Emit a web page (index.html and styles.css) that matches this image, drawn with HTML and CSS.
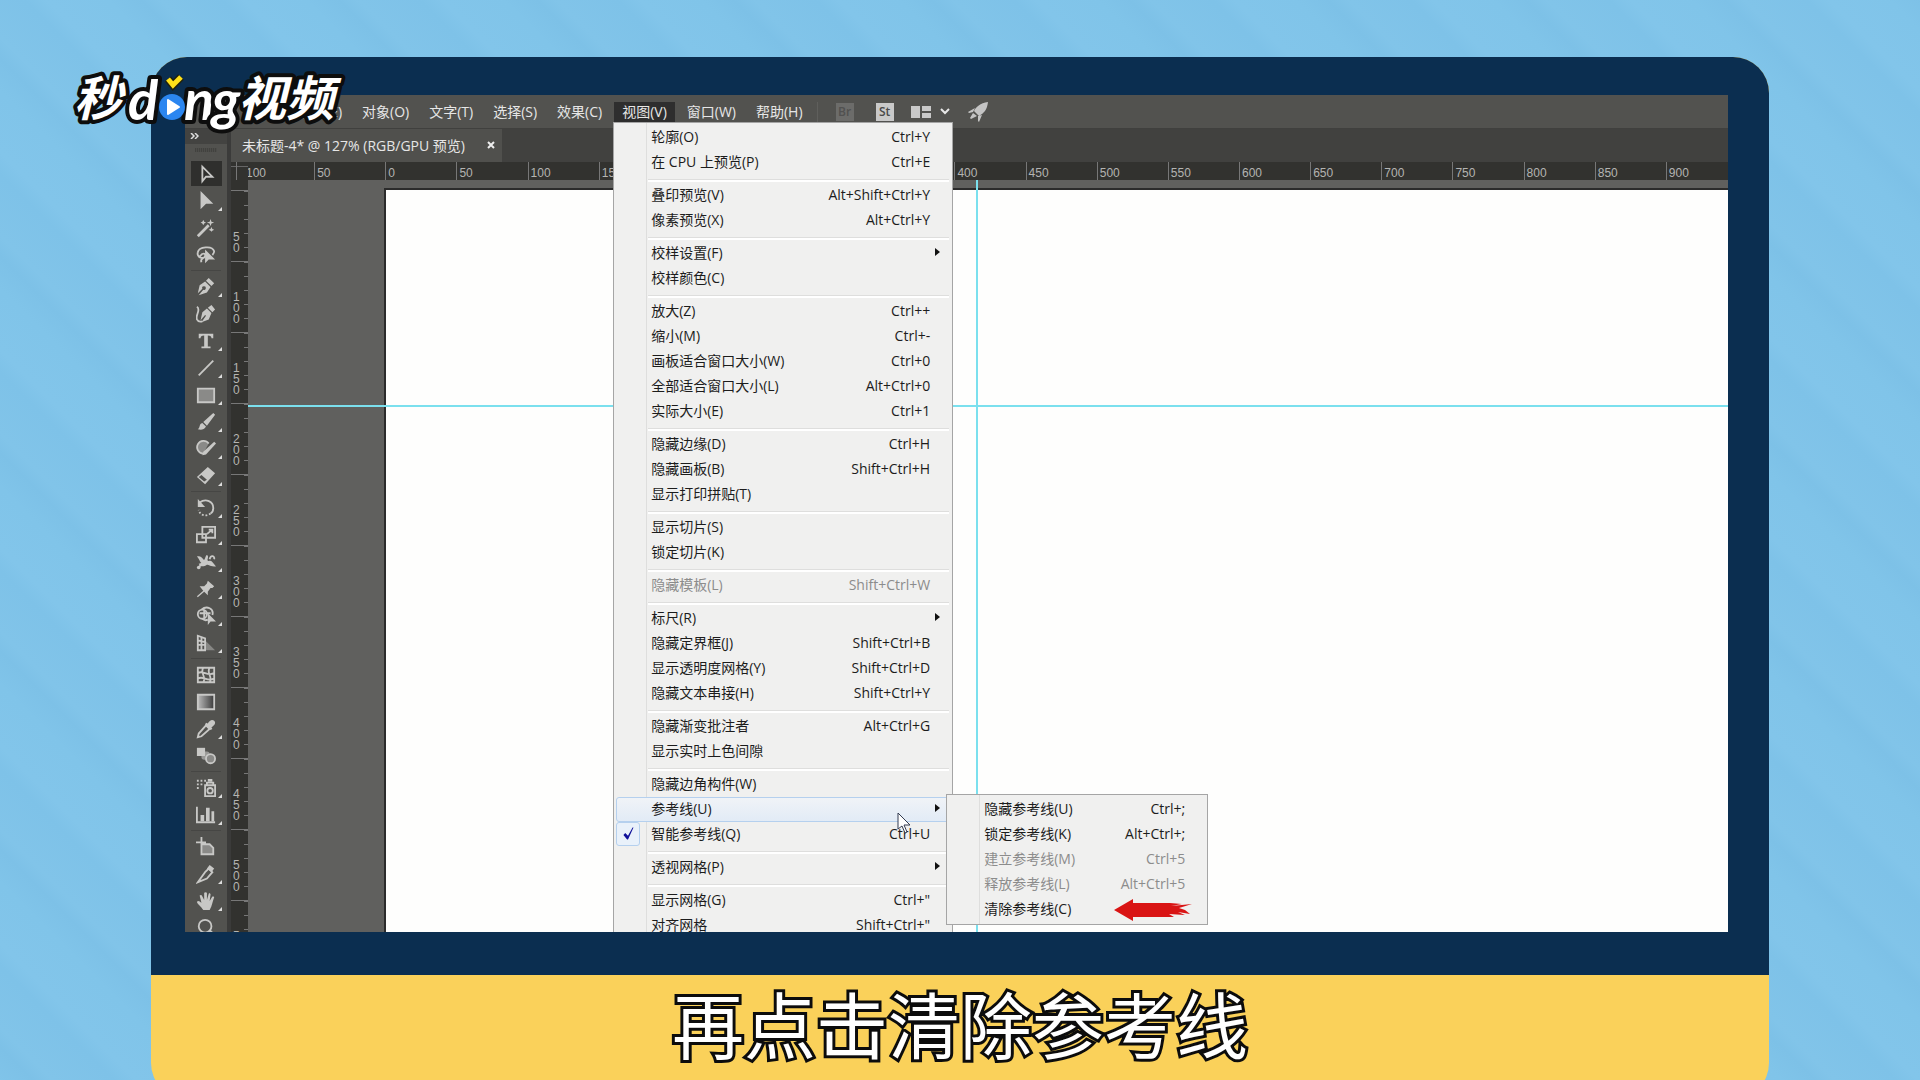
FILE: index.html
```html
<!DOCTYPE html>
<html lang="zh-CN">
<head>
    <meta charset="UTF-8">
    <title>再点击清除参考线</title>
    <link rel="stylesheet" href="styles.css">
</head>
<body>
    <div class="frame">
        <div class="bezel">
            <div class="screen">
                <nav class="menubar">
                    <button class="menu-btn">编辑(E)</button>
                    <button class="menu-btn">对象(O)</button>
                    <button class="menu-btn">文字(T)</button>
                    <button class="menu-btn">选择(S)</button>
                    <button class="menu-btn">效果(C)</button>
                    <div class="menu-open">
                        <button class="menu-btn active">视图(V)</button>
                        <ul class="menu">
                            <li><button>轮廓(O)<kbd>Ctrl+Y</kbd></button></li>
                            <li><button>在 CPU 上预览(P)<kbd>Ctrl+E</kbd></button></li>
                            <li class="sep"></li>
                            <li><button>叠印预览(V)<kbd>Alt+Shift+Ctrl+Y</kbd></button></li>
                            <li><button>像素预览(X)<kbd>Alt+Ctrl+Y</kbd></button></li>
                            <li class="sep"></li>
                            <li><button class="more">校样设置(F)</button></li>
                            <li><button>校样颜色(C)</button></li>
                            <li class="sep"></li>
                            <li><button>放大(Z)<kbd>Ctrl++</kbd></button></li>
                            <li><button>缩小(M)<kbd>Ctrl+-</kbd></button></li>
                            <li><button>画板适合窗口大小(W)<kbd>Ctrl+0</kbd></button></li>
                            <li><button>全部适合窗口大小(L)<kbd>Alt+Ctrl+0</kbd></button></li>
                            <li><button>实际大小(E)<kbd>Ctrl+1</kbd></button></li>
                            <li class="sep"></li>
                            <li><button>隐藏边缘(D)<kbd>Ctrl+H</kbd></button></li>
                            <li><button>隐藏画板(B)<kbd>Shift+Ctrl+H</kbd></button></li>
                            <li><button>显示打印拼贴(T)</button></li>
                            <li class="sep"></li>
                            <li><button>显示切片(S)</button></li>
                            <li><button>锁定切片(K)</button></li>
                            <li class="sep"></li>
                            <li><button disabled>隐藏模板(L)<kbd>Shift+Ctrl+W</kbd></button></li>
                            <li class="sep"></li>
                            <li><button class="more">标尺(R)</button></li>
                            <li><button>隐藏定界框(J)<kbd>Shift+Ctrl+B</kbd></button></li>
                            <li><button>显示透明度网格(Y)<kbd>Shift+Ctrl+D</kbd></button></li>
                            <li><button>隐藏文本串接(H)<kbd>Shift+Ctrl+Y</kbd></button></li>
                            <li class="sep"></li>
                            <li><button>隐藏渐变批注者<kbd>Alt+Ctrl+G</kbd></button></li>
                            <li><button>显示实时上色间隙</button></li>
                            <li class="sep"></li>
                            <li><button>隐藏边角构件(W)</button></li>
                            <li class="current">
                                <button class="more">参考线(U)</button>
                                <svg class="cursor" width="15" height="22" viewBox="0 0 15 22"><path d="M1 1v16l4-3 3 7 2-1-3-7h6z" fill="#fff" stroke="#333b50"/></svg>
                                <ul class="menu submenu">
                                    <li><button>隐藏参考线(U)<kbd>Ctrl+;</kbd></button></li>
                                    <li><button>锁定参考线(K)<kbd>Alt+Ctrl+;</kbd></button></li>
                                    <li><button disabled>建立参考线(M)<kbd>Ctrl+5</kbd></button></li>
                                    <li><button disabled>释放参考线(L)<kbd>Alt+Ctrl+5</kbd></button></li>
                                    <li>
                                        <button>清除参考线(C)</button>
                                        <svg class="pointer" width="79" height="22" viewBox="0 0 79 22"><path d="M0 11 19 0v4h37l12 1-11 2 21-2-13 4 6 2 5 4-12-2 7 3-16-1 5 3H19v4z" fill="#d91414"/></svg>
                                    </li>
                                </ul>
                            </li>
                            <li class="checked"><button>智能参考线(Q)<kbd>Ctrl+U</kbd></button>
                                <svg class="check" width="24" height="24" viewBox="0 0 24 24"><path d="M7 13l2-2 3 3 5-9h1l-6 13h-1z" fill="#10109a"/></svg>
                            </li>
                            <li class="sep"></li>
                            <li><button class="more">透视网格(P)</button></li>
                            <li class="sep"></li>
                            <li><button>显示网格(G)<kbd>Ctrl+"</kbd></button></li>
                            <li><button>对齐网格<kbd>Shift+Ctrl+"</kbd></button></li>
                        </ul>
                    </div>
                    <button class="menu-btn">窗口(W)</button>
                    <button class="menu-btn">帮助(H)</button>
                    <div class="app-bar">
                        <button class="badge dim">Br</button>
                        <button class="badge">St</button>
                        <button class="icon-btn" aria-label="排列文档">
                            <svg width="39" height="14" viewBox="0 0 39 14"><path d="M0 1h9v12H0zM11 1h9v5h-9zM11 8h9v5h-9z" fill="#c9c9c9"/><path d="M30 4l4 4 4-4" fill="none" stroke="#e8e8e8" stroke-width="2"/></svg>
                        </button>
                        <button class="icon-btn" aria-label="GPU 性能">
                            <svg width="20" height="20" viewBox="0 0 20 20"><path d="M20 0C12 1 8 5 6 9l5 5c5-3 8-6 9-14zM7 6L0 10l1 1 4-1zM14 13l-3 7-1-1v-5zM5 11l-3 5 1 1 6-3z" fill="#c4c4c4"/></svg>
                        </button>
                    </div>
                </nav>

                <div class="workspace">
                    <aside class="toolbox">
                        <div class="toolbox-head">
                            <svg width="9" height="6" viewBox="0 0 9 6"><path d="M1 0l3 3-3 3M5 0l3 3-3 3" fill="none" stroke="#ddd" stroke-width="1.5"/></svg>
                        </div>
                        <div class="grip"></div>
                        <div class="tools">
                            <button class="tool selected" aria-label="选择"><svg viewBox="0 0 22 22"><path d="M7 3v16l4-5h7z" class="line"/></svg></button>
                            <button class="tool sub" aria-label="直接选择"><svg viewBox="0 0 22 22"><path d="M5 0v20l6-6h8z"/></svg></button>
                            <button class="tool" aria-label="魔棒"><svg viewBox="0 0 22 22"><path d="M2 20L14 8" class="line thick"/><path d="M16 1l1 3 3 1-3 1-1 3-1-3-3-1 3-1zM8 2l1 2 2 1-2 1-1 2-1-2-2-1 2-1zM17 10l1 2 2 1-2 1-1 1-1-1-2-1 2-1z"/></svg></button>
                            <button class="tool" aria-label="套索"><svg viewBox="0 0 22 22"><path d="M9 14c-5 1-8-2-7-6 1-6 16-8 18-1 0 2-1 3-2 4M4 13c3-5 7-4 6-1-1 4-6 2-4 7" class="line"/><path d="M10 5v15l4-4h7z"/></svg></button>
                            <hr>
                            <button class="tool sub" aria-label="钢笔"><svg viewBox="0 0 22 22"><path d="M14 1l6 6-3 3-6-6zM10 5l6 6-4 6-9 3 5-6a2 2 0 1 0-1-1l-5 5L4 9z"/></svg></button>
                            <button class="tool" aria-label="曲率"><svg viewBox="0 0 22 22"><path d="M17 1l4 5-3 3-5-5zM12 5l5 5-3 7-8 3 5-7-1-1-5 6 2-9z"/><path d="M1 3c5 3-2 9 0 14 1 2 3 3 6 2" class="line"/></svg></button>
                            <button class="tool sub" aria-label="文字"><svg viewBox="0 0 22 22"><path d="M3 3h16v5h-2c0-2-1-3-4-3v12h3v2H6v-2h3V5C6 5 5 6 5 8H3z"/></svg></button>
                            <button class="tool sub" aria-label="直线段"><svg viewBox="0 0 22 22"><path d="M3 19L19 3" class="line"/></svg></button>
                            <button class="tool sub" aria-label="矩形"><svg viewBox="0 0 22 22"><path d="M2 4h18v15H2z" class="line soft"/></svg></button>
                            <button class="tool sub" aria-label="画笔"><svg viewBox="0 0 22 22"><path d="M19 1l2 2-9 12-4-4zM7 12l4 4c-2 4-6 4-9 3 3-2 1-6 5-7z"/></svg></button>
                            <button class="tool sub" aria-label="Shaper"><svg viewBox="0 0 22 22"><path d="M14 5A7 7 0 1 0 8 16" class="line soft"/><path d="M20 3l2 2L11 17l-4 1 1-4z"/></svg></button>
                            <button class="tool sub" aria-label="橡皮擦"><svg viewBox="0 0 22 22"><path fill-rule="evenodd" d="M13 1l8 7-11 12-9-8zM6 10l-3 2 6 5 3-2z"/></svg></button>
                            <hr>
                            <button class="tool sub" aria-label="旋转"><svg viewBox="0 0 22 22"><path d="M4 5c7-5 15-1 15 6 0 3-1 5-3 6" class="line"/><path d="M16 17c-5 4-12 2-13-4" class="line dash"/><path d="M2 1v9h8z"/></svg></button>
                            <button class="tool sub" aria-label="比例缩放"><svg viewBox="0 0 22 22"><path d="M7 2h14v12H7zM1 10h10v9H1zM12 10l6-5M14 5h4v4" class="line"/></svg></button>
                            <button class="tool sub" aria-label="宽度"><svg viewBox="0 0 22 22"><path d="M2 18L10 9" class="line"/><path d="M1 5c4-1 5 1 8 4 2-4 2-7 4-5 1 3-2 5 1 6 3-1 4 1 8 6-6 0-8-2-10-2-4 3-8 2-9-1l3-1C4 11 4 8 1 5z"/><circle cx="3" cy="17" r="2"/><path d="M15 8c1-5 6-4 5 0" class="line"/></svg></button>
                            <button class="tool sub" aria-label="操控变形"><svg viewBox="0 0 22 22"><path d="M13 2l7 6-2 2-2 0-3 4v4l-4-4-7 6-1-1 7-6-4-5 5 0 3-3z"/></svg></button>
                            <button class="tool sub" aria-label="形状生成器"><svg viewBox="0 0 22 22"><circle cx="7" cy="9" r="5" class="line"/><path d="M6 4c6-5 14-1 12 6M7 14c2 2 4 2 6 1M4 8h12M9 4v10" class="line"/><path d="M13 8v13l3-4h6z"/></svg></button>
                            <button class="tool sub" aria-label="透视网格"><svg viewBox="0 0 22 22"><path d="M2 3l8 3v13H2zM2 8l8 2M2 13h8M6 4v15" class="line"/><path d="M11 9l10 10H11z" opacity=".45"/></svg></button>
                            <hr>
                            <button class="tool" aria-label="网格"><svg viewBox="0 0 22 22"><path d="M2 3h18v16H2zM2 9c6-4 10 4 18 0M2 15c6-4 10 4 18 0M8 3c-4 6 4 10 0 16M15 3c-4 6 4 10 0 16" class="line"/></svg></button>
                            <button class="tool" aria-label="渐变"><svg viewBox="0 0 22 22"><defs><linearGradient id="grad"><stop offset="0" stop-color="#bbb"/><stop offset="1" stop-color="#3a3a3a"/></linearGradient></defs><path d="M2 3h18v16H2z" class="line gradient"/></svg></button>
                            <button class="tool sub" aria-label="吸管"><svg viewBox="0 0 22 22"><path d="M11 7l4 4-9 8-4 1 1-4z" class="line"/><path d="M11 4l2 1c2-4 5-5 7-3s1 5-3 7l1 2-2 1-6-6z"/></svg></button>
                            <button class="tool" aria-label="混合"><svg viewBox="0 0 22 22"><path d="M1 2h9v9H1z"/><rect x="6" y="6" width="9" height="9" rx="3" opacity=".6"/><circle cx="16" cy="14" r="5" class="line soft"/></svg></button>
                            <hr>
                            <button class="tool sub" aria-label="符号喷枪"><svg viewBox="0 0 22 22"><path d="M10 8h11v12H10zM12 8V5h7v3" class="line"/><circle cx="15.500" cy="14" r="3" class="line"/><path d="M13 1h5v3h-5zM1 2h2v2H1zM5 2h2v2H5zM9 2h2v2H9zM1 6h2v2H1zM5 6h2v2H5zM1 10h2v2H1z"/></svg></button>
                            <button class="tool sub" aria-label="柱形图"><svg viewBox="0 0 22 22"><path d="M1 2v17h20" class="line"/><path d="M5 11h4v7H5zM11 3h4v15h-4zM17 7h3v11h-3z"/></svg></button>
                            <hr>
                            <button class="tool" aria-label="画板"><svg viewBox="0 0 22 22"><path d="M6 0v12M0 6h11M6 8h9l4 4v7H6z" class="line soft"/></svg></button>
                            <button class="tool sub" aria-label="切片"><svg viewBox="0 0 22 22"><path d="M14 5l4 4-6 7-10 4 8-11z" class="line"/><path d="M15 1l5 4-3 4-5-4z"/></svg></button>
                            <button class="tool sub" aria-label="抓手"><svg viewBox="0 0 22 22"><path d="M8 21c-2-4-6-6-7-9 1-2 3-1 5 1L4 5c1-1 2-1 3 1l2 4V2c1-1 2-1 3 0v8l2-7c1-1 2 0 2 1l-1 7 3-5c1 0 2 0 2 1-2 5-2 9-5 14z"/></svg></button>
                            <button class="tool" aria-label="缩放"><svg viewBox="0 0 22 22"><circle cx="10" cy="9" r="7" class="line"/><path d="M15 14l5 5" class="line thick"/></svg></button>
                        </div>
                    </aside>

                    <main class="document">
                        <div class="tabs">
                            <div class="tab">
                                <span>未标题-4* @ 127% (RGB/GPU 预览)</span>
                                <button class="tab-close" aria-label="关闭"><svg width="8" height="8" viewBox="0 0 8 8"><path d="M1 1l6 6M7 1L1 7" stroke="#eee" stroke-width="2"/></svg></button>
                            </div>
                        </div>
                        <div class="ruler-corner"></div>
                        <div class="ruler-x">
                            <div class="ruler-x-track">
                                <span>100</span><span>50</span><span>0</span><span>50</span><span>100</span><span>150</span><span>200</span>
                                <span>250</span><span>300</span><span>350</span><span>400</span><span>450</span><span>500</span><span>550</span>
                                <span>600</span><span>650</span><span>700</span><span>750</span><span>800</span><span>850</span><span>900</span>
                            </div>
                        </div>
                        <div class="ruler-y">
                            <div><span>50</span></div>
                            <div><span>100</span></div>
                            <div><span>150</span></div>
                            <div><span>200</span></div>
                            <div><span>250</span></div>
                            <div><span>300</span></div>
                            <div><span>350</span></div>
                            <div><span>400</span></div>
                            <div><span>450</span></div>
                            <div><span>500</span></div>
                            <div><span>550</span></div>
                        </div>
                        <div class="canvas">
                            <div class="artboard"></div>
                            <div class="guide guide-x"></div>
                            <div class="guide guide-y"></div>
                        </div>
                    </main>
                </div>
            </div>
        </div>
        <p class="caption">再点击清除参考线</p>
    </div>

    <svg class="logo" width="280" height="80" viewBox="0 0 280 80" role="img" aria-label="秒dong视频">
        <g class="logo-text">
            <text class="han" x="4" y="52">秒</text>
            <text class="latin" x="58" y="56">d</text>
            <text class="latin" x="114" y="56">n</text>
            <text class="latin" x="142" y="56">g</text>
            <text class="han" x="168" y="52">视频</text>
        </g>
        <circle cx="102" cy="43" r="13" fill="#2b86f0"/>
        <path d="M98 36v14l11-7z" fill="#fff" stroke="#fff" stroke-width="2" stroke-linejoin="round"/>
        <path d="M98 15l5 6 8-8" class="logo-tick-edge"/>
        <path d="M98 15l5 6 8-8" class="logo-tick"/>
    </svg>
</body>
</html>
```

FILE: styles.css
```css
* {
    box-sizing: border-box;
}
body {
    margin: 0;
    height: 100vh;
    overflow: hidden;
    position: relative;
    padding: 57px 151px 0;
    font: 14px "Open Sans", "Noto Sans CJK SC", sans-serif;
    background: repeating-linear-gradient(45deg, #80c4e9 0, #7dc1e7 23px, #81c4e9 37px, #7ec2e8 81px, #82c5ea 96px, #80c4e9 140px);
}
button {
    font: inherit;
    color: inherit;
    background: none;
    border: none;
    padding: 0;
    margin: 0;
}
ul {
    list-style: none;
    margin: 0;
    padding: 0;
}
.frame {
    display: flex;
    flex-direction: column;
    height: calc(100vh - 38px);
    border-radius: 36px;
    overflow: hidden;
    background: #fad15a;
}
.bezel {
    flex: 1;
    min-height: 0;
    display: flex;
    padding: 38px 41px 43px 34px;
    background: #0b2e50;
}
.screen {
    flex: 1;
    display: flex;
    flex-direction: column;
    min-width: 0;
    overflow: hidden;
    background: #3b3b3a;
}
.caption {
    margin: 0;
    height: 124px;
    line-height: 94px;
    text-align: center;
    font-family: "Noto Sans CJK SC", sans-serif;
    font-size: 72px;
    font-weight: 400;
    color: #fff;
    -webkit-text-stroke: 6px #0c0c0c;
    paint-order: stroke fill;
    stroke-linejoin: round;
}

/* menu bar */
.menubar {
    display: flex;
    align-items: center;
    height: 33px;
    padding-left: 103px;
    background: #52524f;
    color: #e6e6e6;
}
.menu-btn {
    height: 20px;
    padding: 0 10px;
    line-height: 20px;
    white-space: nowrap;
}
.menu-btn.active {
    display: block;
    padding: 0 8px;
    background: #2e2e2e;
}
.menu-open {
    position: relative;
    z-index: 5;
    margin: 0 2px;
}
.app-bar {
    display: flex;
    align-items: center;
    height: 20px;
    margin-left: 4px;
    padding-left: 18px;
    border-left: 1px solid #5f5f5c;
}
.badge {
    width: 18px;
    height: 18px;
    margin-right: 22px;
    line-height: 18px;
    font-size: 12px;
    font-weight: 600;
    background: #c9c9c9;
    color: #4a4a4a;
}
.badge.dim {
    background: #6c6c6a;
    color: #515150;
}
.badge + .icon-btn {
    margin-left: -5px;
}
.icon-btn {
    display: flex;
    margin-right: 18px;
}

/* dropdown */
.menu {
    position: absolute;
    top: 20px;
    left: -1px;
    width: 340px;
    padding: 2px;
    border: 1px solid #a5a5a5;
    background: linear-gradient(90deg, #f0f0ef 32px, #dededd 32px, #dededd 33px, #f0f0ef 33px);
    color: #1c1c1c;
}
.menu li {
    position: relative;
    height: 25px;
}
.menu li button {
    display: flex;
    justify-content: space-between;
    align-items: center;
    width: 100%;
    height: 100%;
    padding: 0 20px 2px 35px;
    text-align: left;
    white-space: nowrap;
}
.menu li button:disabled {
    color: #8c8c8c;
}
.menu kbd {
    font: inherit;
}
.menu .sep {
    height: 8px;
    padding: 4px 1px 0 32px;
}
.menu .sep::before {
    content: "";
    display: block;
    height: 2px;
    border-top: 1px solid #dededd;
    background: #fff;
}
.menu .more::after {
    content: "";
    margin-right: -10px;
    border: 4px solid transparent;
    border-left: 5px solid #111;
    border-right: none;
}
.menu .current > button {
    border: 1px solid #b5d0ee;
    border-radius: 3px;
    padding: 0 19px 2px 34px;
    background: linear-gradient(#f0f3f7, #e2ebf6);
}
.check {
    position: absolute;
    left: 0;
    top: 0;
    border: 1px solid #b5d0ee;
    border-radius: 3px;
    background: #e9f1fa;
}
.cursor {
    position: absolute;
    left: 281px;
    top: 15px;
    z-index: 2;
}
.submenu {
    top: -3px;
    left: 330px;
    width: 262px;
    z-index: 3;
}
.pointer {
    position: absolute;
    right: 12px;
    top: 2px;
}

/* toolbox */
.workspace {
    flex: 1;
    display: flex;
    min-height: 0;
    border-top: 1px solid #40403e;
}
.toolbox {
    width: 42px;
    background: #52524f;
}
.toolbox-head {
    height: 15px;
    padding: 0 5px;
    line-height: 10px;
    background: #434341;
}
.grip {
    width: 22px;
    height: 4px;
    margin: 4px auto 8px;
    background: repeating-linear-gradient(90deg, #42423f 0, #42423f 1px, #4d4d4a 1px, #4d4d4a 2px);
}
.tools hr {
    width: 30px;
    height: 1px;
    margin: 2px auto;
    border: none;
    background: #464644;
}
.tool {
    display: flex;
    position: relative;
    justify-content: center;
    align-items: center;
    width: 31px;
    height: 27px;
    margin: 0 auto;
}
.tool.selected {
    background: #2f2f2d;
    background-clip: content-box;
    padding: 1px 0;
}
.tool svg {
    width: 20px;
    height: 20px;
    fill: #c8c8c6;
}
.tool .line {
    fill: none;
    stroke: #c8c8c6;
    stroke-width: 2;
}
.tool .thick {
    stroke-width: 3;
}
.tool .soft {
    fill: #8a8a88;
}
.tool .dash {
    stroke-dasharray: 2 2;
}
.tool .gradient {
    fill: url(#grad);
}
.tool.sub::after {
    content: "";
    position: absolute;
    right: 0;
    bottom: 3px;
    border-left: 4px solid transparent;
    border-bottom: 4px solid #ddd;
}

/* document window */
.document {
    flex: 1;
    min-width: 0;
    display: grid;
    grid-template-columns: 17px 1fr;
    grid-template-rows: 33px 18px 1fr;
    margin-left: 4px;
}
.tabs {
    grid-column: 1 / 3;
    background: #41413f;
    display: flex;
}
.tab {
    display: flex;
    align-items: center;
    gap: 22px;
    padding: 0 7px 2px 11px;
    background: #50504d;
    color: #e6e6e6;
    white-space: nowrap;
}
.tab-close {
    display: flex;
}
.ruler-corner {
    background: linear-gradient(#777, #777) 5px 0 / 1px 100% no-repeat, linear-gradient(#666, #666) 0 4px / 100% 1px no-repeat, #32322f;
}
.ruler-x {
    overflow: hidden;
    background: #32322f;
}
.ruler-x-track {
    display: grid;
    grid-template-columns: repeat(21, 1fr);
    height: 18px;
    margin: 0 -9px 0 -5px;
}
.ruler-x span {
    padding-left: 2px;
    border-left: 1px solid #777;
    font: 12px/23px "Liberation Sans", sans-serif;
    color: #b4b4b2;
    background: linear-gradient(90deg, #777 1px, transparent 1px) -1px 100% / 20% 4px repeat-x;
}
.ruler-y {
    padding-top: 10px;
    overflow: hidden;
    background: #32322f;
}
.ruler-y div {
    display: flex;
    align-items: flex-end;
    height: 71px;
    padding: 0 0 7px 2px;
    border-top: 1px solid #777;
    background: linear-gradient(#777 1px, transparent 1px) 100% 0 / 4px 20% repeat-y;
}
.ruler-y span {
    width: 7px;
    font: 12px/11px "Liberation Sans", sans-serif;
    word-break: break-all;
    color: #b4b4b2;
}
.canvas {
    position: relative;
    padding: 8px 0 0 136px;
    background: #60605e;
}
.artboard {
    height: 100%;
    border-top: 2px solid #2b2b2b;
    border-left: 2px solid #2b2b2b;
    background: #fefefd;
}
.guide {
    position: absolute;
    background: #7be0ee;
}
.guide-x {
    top: 225px;
    left: 0;
    right: 0;
    height: 2px;
}
.guide-y {
    top: 0;
    bottom: 0;
    left: 728px;
    width: 2px;
}

/* logo */
.logo {
    position: absolute;
    left: 70px;
    top: 64px;
}
.logo-text {
    fill: #fff;
    stroke: #0d0d0d;
    stroke-width: 8;
    stroke-linejoin: round;
    paint-order: stroke;
}
.logo .han {
    font: italic 700 48px "Noto Sans CJK SC", sans-serif;
}
.logo .latin {
    font: italic 700 56px Lato, sans-serif;
}
.logo-tick {
    fill: none;
    stroke: #ffe11a;
    stroke-width: 5;
}
.logo-tick-edge {
    fill: none;
    stroke: #22220d;
    stroke-width: 8;
}
```
